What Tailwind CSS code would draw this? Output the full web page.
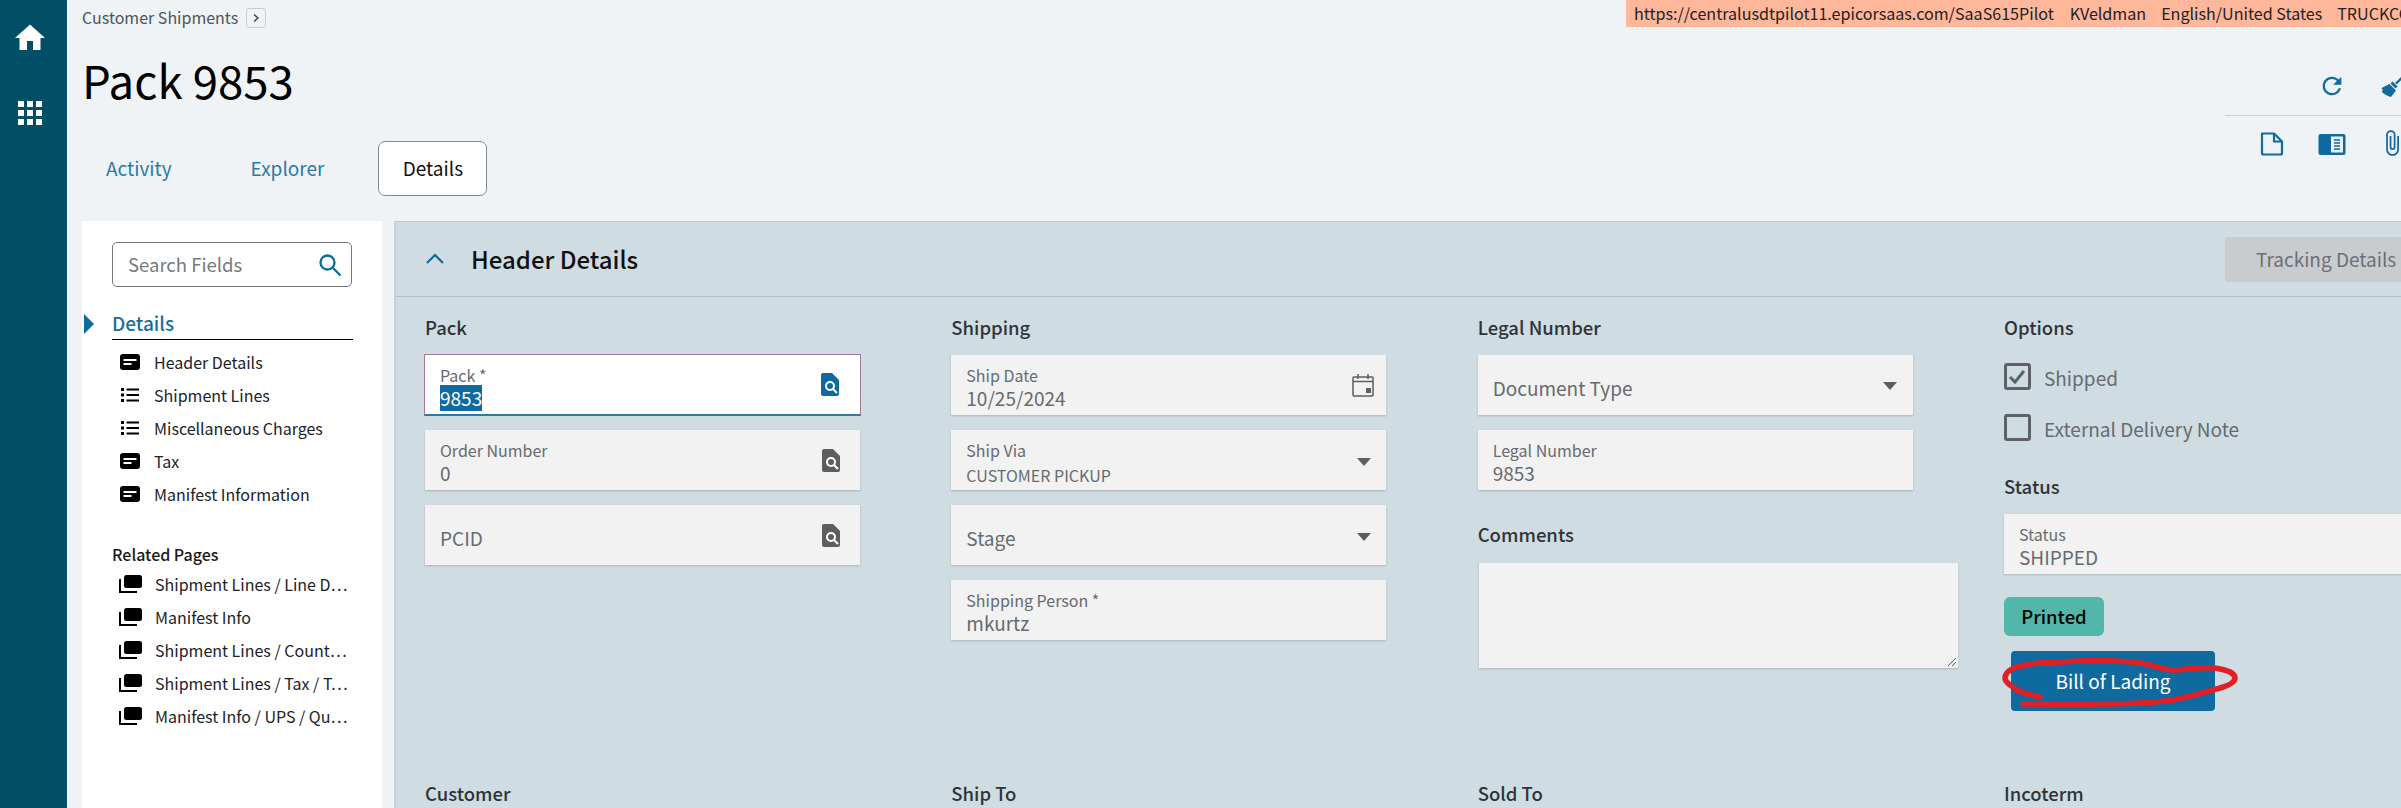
<!DOCTYPE html>
<html lang="en">
<head>
<meta charset="utf-8">
<title>Pack 9853</title>
<script src="https://cdn.jsdelivr.net/npm/@tailwindcss/browser@4"></script>
</head>
<body class="overflow-hidden">
<div class="relative flex w-[2401px] h-[808px] overflow-hidden bg-[#eff3f6] font-['Noto_Sans_CJK_SC',sans-serif] text-black">
  <!-- rail -->
  <aside class="w-[67px] shrink-0 bg-[#004f66] flex flex-col items-center pr-[7px] pt-[20px] gap-[45px]">
    <svg class="w-[36px] h-[36px]" viewBox="0 0 24 24" fill="#fff"><path d="M10 20v-6h4v6h5v-8h3L12 3 2 12h3v8z"/></svg>
    <div class="grid grid-cols-3 gap-[3px] w-[24px]">
      <span class="w-[6px] h-[6px] bg-white"></span><span class="w-[6px] h-[6px] bg-white"></span><span class="w-[6px] h-[6px] bg-white"></span>
      <span class="w-[6px] h-[6px] bg-white"></span><span class="w-[6px] h-[6px] bg-white"></span><span class="w-[6px] h-[6px] bg-white"></span>
      <span class="w-[6px] h-[6px] bg-white"></span><span class="w-[6px] h-[6px] bg-white"></span><span class="w-[6px] h-[6px] bg-white"></span>
    </div>
  </aside>

  <main class="flex-1 min-w-0 flex flex-col">
    <!-- page head -->
    <header class="flex h-[221px] shrink-0">
      <div class="w-[2158px] shrink-0 pl-[15px]">
        <div class="flex items-center h-[28px] pt-[6px] gap-[8px] text-[16px] leading-[20px] text-[#4d5358]">
          <span>Customer Shipments</span>
          <span class="w-[20px] h-[20px] mt-[2px] border border-[#c9cdd0] rounded-[3px] flex items-center justify-center">
            <svg class="w-[10px] h-[10px]" viewBox="0 0 10 10" fill="none" stroke="#444" stroke-width="1.4"><path d="M3 1.5 7 5 3 8.5"/></svg>
          </span>
        </div>
        <h1 class="mt-[21px] text-[45.5px] leading-[60px] font-normal">Pack 9853</h1>
        <nav class="mt-[32px] ml-[-15px] pl-[39px] flex items-center h-[55px] text-[19px] text-[#2a7ca6]">
          <span>Activity</span>
          <span class="ml-[79px]">Explorer</span>
          <span class="ml-[54px] w-[109px] h-[55px] flex items-center justify-center bg-white border border-[#85898c] rounded-[7px] text-[#111]">Details</span>
        </nav>
      </div>
      <div class="w-[197px] shrink-0 pt-[66px]">
        <div class="flex h-[50px] pl-[17px] border-b border-[#c9ced2] items-start">
          <span class="w-[60px]"></span>
          <span class="w-[60px] h-[40px] flex items-center justify-center">
            <svg class="w-[28px] h-[28px]" viewBox="0 0 24 24" fill="#0f6a9f"><path d="M17.65 6.35A7.958 7.958 0 0012 4c-4.42 0-7.99 3.58-7.99 8s3.57 8 7.99 8c3.73 0 6.84-2.55 7.73-6h-2.08A5.99 5.99 0 0112 18c-3.31 0-6-2.69-6-6s2.69-6 6-6c1.66 0 3.14.69 4.22 1.78L13 11h7V4l-2.35 2.35z"/></svg>
          </span>
          <span class="w-[60px] h-[40px] flex items-center justify-center">
            <svg class="w-[28px] h-[28px]" viewBox="0 0 28 28" fill="#0f6a9f"><path d="M26 2 17 11l1.6 1.6L27.6 3.6z"/><path d="M14.5 9.5 19.5 14.5 17.5 16.5 12.5 11.5z"/><path d="M11.5 12 18 18.500 13 25c-3-.8-7-2.8-9.500-5.500l1.500-1-1.500-2.500z"/></svg>
          </span>
        </div>
        <div class="flex pl-[17px] pt-[16px]">
          <span class="w-[60px] flex justify-center">
            <svg class="w-[24px] h-[24px]" viewBox="0 0 24 24" fill="none" stroke="#0f6a9f" stroke-width="2.2" stroke-linejoin="round"><path d="M2 1.5h12l8 8V21a1.5 1.5 0 0 1-1.5 1.5h-17A1.5 1.5 0 0 1 2 21z"/><path d="M14 1.5v8h8"/></svg>
          </span>
          <span class="w-[60px] flex justify-center">
            <svg class="w-[28px] h-[24px]" viewBox="0 0 28 24"><rect x="0.5" y="2" width="27" height="21" rx="2" fill="#0f6a9f"/><rect x="13" y="4.5" width="12" height="16" fill="#eff3f6"/><path d="M16 8h6M16 11h6M16 14h6M16 17h6" stroke="#0f6a9f" stroke-width="1.3"/></svg>
          </span>
          <span class="w-[60px] flex justify-center">
            <svg class="w-[28px] h-[28px] mt-[-3px]" viewBox="0 0 24 24" fill="#0f6a9f"><path d="M16.5 6v11.5c0 2.21-1.79 4-4 4s-4-1.79-4-4V5a2.5 2.5 0 015 0v10.5c0 .55-.45 1-1 1s-1-.45-1-1V6H10v9.5a2.5 2.5 0 005 0V5c0-2.21-1.79-4-4-4S7 2.79 7 5v12.5c0 3.04 2.46 5.5 5.5 5.5s5.5-2.46 5.5-5.5V6h-1.5z"/></svg>
          </span>
        </div>
      </div>
    </header>

    <div class="flex flex-1 min-h-0 pl-[15px] gap-[12px]">
      <!-- left nav -->
      <section class="w-[300px] shrink-0 bg-white pl-[30px] pr-[29px] pt-[21px] relative">
        <div class="flex items-center justify-between h-[45px] w-[240px] border border-[#73787c] rounded-[5px] pl-[15px] pr-[9px] text-[18.5px] text-[#74797d]">
          <span>Search Fields</span>
          <svg class="w-[24px] h-[24px]" viewBox="0 0 24 24" fill="none" stroke="#0f6a9f" stroke-width="2.3"><circle cx="9.5" cy="9.5" r="7"/><path d="m15 15 7.5 7.5"/></svg>
        </div>
        <div class="relative mt-[24px] h-[29px] border-b border-black w-[241px] text-[19px] leading-[24px] font-medium text-[#1a6e9c]">
          <span class="absolute left-[-28px] top-[3px] border-y-[10px] border-y-transparent border-l-[10px] border-l-[#0f6a9f]"></span>
          Details
        </div>
        <ul class="mt-[5px] w-[241px] text-[16px] text-[#1c2229]">
          <li class="flex items-center h-[33px] pl-[8px] gap-[14px]">
            <svg class="w-[20px] h-[16px] shrink-0" viewBox="0 0 20 16"><rect width="20" height="16" rx="3" fill="#000"/><path d="M3.500 5h13v2h-13zM3.500 9h8v2h-8z" fill="#fff"/></svg>Header Details</li>
          <li class="flex items-center h-[33px] pl-[8px] gap-[14px]">
            <svg class="w-[20px] h-[16px] shrink-0" viewBox="0 0 20 16" fill="#000"><path d="M1 1h3v3H1zM1 6.500h3v3H1zM1 12h3v3H1zM6.500 1.500H19v2H6.500zM6.500 7H19v2H6.500zM6.500 12.500H19v2H6.500z"/></svg>Shipment Lines</li>
          <li class="flex items-center h-[33px] pl-[8px] gap-[14px]">
            <svg class="w-[20px] h-[16px] shrink-0" viewBox="0 0 20 16" fill="#000"><path d="M1 1h3v3H1zM1 6.500h3v3H1zM1 12h3v3H1zM6.500 1.500H19v2H6.500zM6.500 7H19v2H6.500zM6.500 12.500H19v2H6.500z"/></svg>Miscellaneous Charges</li>
          <li class="flex items-center h-[33px] pl-[8px] gap-[14px]">
            <svg class="w-[20px] h-[16px] shrink-0" viewBox="0 0 20 16"><rect width="20" height="16" rx="3" fill="#000"/><path d="M3.500 5h13v2h-13zM3.500 9h8v2h-8z" fill="#fff"/></svg>Tax</li>
          <li class="flex items-center h-[33px] pl-[8px] gap-[14px]">
            <svg class="w-[20px] h-[16px] shrink-0" viewBox="0 0 20 16"><rect width="20" height="16" rx="3" fill="#000"/><path d="M3.500 5h13v2h-13zM3.500 9h8v2h-8z" fill="#fff"/></svg>Manifest Information</li>
        </ul>
        <div class="mt-[32px] text-[16px] leading-[24px] font-medium text-[#1a1a1a]">Related Pages</div>
        <ul class="mt-[1px] w-[241px] text-[16px] text-[#1c2229]">
          <li class="flex items-center h-[33px] pl-[7px] gap-[13px]"><svg class="w-[23px] h-[18px] shrink-0" viewBox="0 0 23 18"><rect x="5" y="0" width="18" height="13" rx="2.500" fill="#000"/><path d="M1 4v13h17" fill="none" stroke="#000" stroke-width="2"/></svg><span>Shipment Lines / Line D…</span></li>
          <li class="flex items-center h-[33px] pl-[7px] gap-[13px]"><svg class="w-[23px] h-[18px] shrink-0" viewBox="0 0 23 18"><rect x="5" y="0" width="18" height="13" rx="2.500" fill="#000"/><path d="M1 4v13h17" fill="none" stroke="#000" stroke-width="2"/></svg><span>Manifest Info</span></li>
          <li class="flex items-center h-[33px] pl-[7px] gap-[13px]"><svg class="w-[23px] h-[18px] shrink-0" viewBox="0 0 23 18"><rect x="5" y="0" width="18" height="13" rx="2.500" fill="#000"/><path d="M1 4v13h17" fill="none" stroke="#000" stroke-width="2"/></svg><span>Shipment Lines / Count…</span></li>
          <li class="flex items-center h-[33px] pl-[7px] gap-[13px]"><svg class="w-[23px] h-[18px] shrink-0" viewBox="0 0 23 18"><rect x="5" y="0" width="18" height="13" rx="2.500" fill="#000"/><path d="M1 4v13h17" fill="none" stroke="#000" stroke-width="2"/></svg><span>Shipment Lines / Tax / T…</span></li>
          <li class="flex items-center h-[33px] pl-[7px] gap-[13px]"><svg class="w-[23px] h-[18px] shrink-0" viewBox="0 0 23 18"><rect x="5" y="0" width="18" height="13" rx="2.500" fill="#000"/><path d="M1 4v13h17" fill="none" stroke="#000" stroke-width="2"/></svg><span>Manifest Info / UPS / Qu…</span></li>
        </ul>
      </section>

      <!-- main panel -->
      <section class="flex-1 min-w-0 bg-[#cfdce1] border-t border-l-[2px] border-t-[#bfccd2] border-l-[#c3d0d6]">
        <div class="flex items-center h-[75px] border-b border-[#a8c4c9] pl-[28px] overflow-hidden">
          <svg class="w-[22px] h-[14px] shrink-0" viewBox="0 0 22 14" fill="none" stroke="#0f6a9f" stroke-width="2.200"><path d="m3 11 8-8 8 8"/></svg>
          <span class="ml-[25px] text-[24px] font-medium text-[#111]">Header Details</span>
          <span class="ml-auto w-[176px] h-[45px] shrink-0 bg-[#c8cccf] rounded-l-[4px] pl-[31px] flex items-center text-[19px] text-[#6a7075] whitespace-nowrap overflow-hidden">Tracking Details</span>
        </div>
        <div class="grid grid-cols-[repeat(4,526.33px)] gap-y-[70px] pl-[29px] pt-[18px]">
          <!-- Pack -->
          <div>
            <h2 class="text-[18.5px] leading-[24px] font-medium text-[#2e3338]">Pack</h2>
            <div class="mt-[15px] w-[437px] h-[62px] flex items-center justify-between bg-white border border-[#a8789a] border-b-[2px] border-b-[#2a7ca6] pl-[15px] pr-[21px] ml-[-1px]">
              <div class="flex flex-col items-start pt-[6px]">
                <span class="text-[16px] leading-[20px] text-[#666b70]">Pack *</span>
                <span class="text-[19px] leading-[26px] bg-[#0f6a9f] text-white">9853</span>
              </div>
              <svg class="w-[18px] h-[23px]" viewBox="0 0 18 23"><path d="M2 0h9l7 7v14a2 2 0 0 1-2 2H2a2 2 0 0 1-2-2V2a2 2 0 0 1 2-2z" fill="#0f6a9f"/><circle cx="9" cy="13" r="4" fill="none" stroke="#fff" stroke-width="2"/><path d="m12 16 4 4" stroke="#fff" stroke-width="2.200"/></svg>
            </div>
            <div class="mt-[14px] w-[435px] h-[60px] flex items-center justify-between bg-[#f2f2f2] shadow-[0_1px_2px_rgba(0,0,0,0.18)] pl-[15px] pr-[20px]">
              <div class="pt-[6px]"><div class="text-[16px] leading-[20px] text-[#666b70]">Order Number</div><div class="text-[19px] leading-[26px] text-[#666b70]">0</div></div>
              <svg class="w-[18px] h-[23px]" viewBox="0 0 18 23"><path d="M2 0h9l7 7v14a2 2 0 0 1-2 2H2a2 2 0 0 1-2-2V2a2 2 0 0 1 2-2z" fill="#5e5e5e"/><circle cx="9" cy="13" r="4" fill="none" stroke="#fff" stroke-width="2"/><path d="m12 16 4 4" stroke="#fff" stroke-width="2.200"/></svg>
            </div>
            <div class="mt-[15px] w-[435px] h-[60px] flex items-center justify-between bg-[#f2f2f2] shadow-[0_1px_2px_rgba(0,0,0,0.18)] pl-[15px] pr-[20px]">
              <span class="pt-[7px] text-[19px] text-[#666b70]">PCID</span>
              <svg class="w-[18px] h-[23px]" viewBox="0 0 18 23"><path d="M2 0h9l7 7v14a2 2 0 0 1-2 2H2a2 2 0 0 1-2-2V2a2 2 0 0 1 2-2z" fill="#5e5e5e"/><circle cx="9" cy="13" r="4" fill="none" stroke="#fff" stroke-width="2"/><path d="m12 16 4 4" stroke="#fff" stroke-width="2.200"/></svg>
            </div>
          </div>
          <!-- Shipping -->
          <div>
            <h2 class="text-[18.5px] leading-[24px] font-medium text-[#2e3338]">Shipping</h2>
            <div class="mt-[16px] w-[435px] h-[60px] flex items-center justify-between bg-[#f2f2f2] shadow-[0_1px_2px_rgba(0,0,0,0.18)] pl-[15px] pr-[12px]">
              <div class="pt-[6px]"><div class="text-[16px] leading-[20px] text-[#666b70]">Ship Date</div><div class="text-[19px] leading-[26px] text-[#666b70]">10/25/2024</div></div>
              <svg class="w-[22px] h-[23px]" viewBox="0 0 22 23" fill="none" stroke="#5e5e5e" stroke-width="1.500"><rect x="1" y="3" width="20" height="19" rx="1"/><path d="M1 7.500h20M6 0v5M16 0v5"/><rect x="14" y="14" width="5" height="5" fill="#5e5e5e" stroke="none"/></svg>
            </div>
            <div class="mt-[15px] w-[435px] h-[60px] flex items-center justify-between bg-[#f2f2f2] shadow-[0_1px_2px_rgba(0,0,0,0.18)] pl-[15px] pr-[15px]">
              <div class="pt-[8px]"><div class="text-[16px] leading-[20px] text-[#666b70]">Ship Via</div><div class="mt-[2px] text-[16px] leading-[26px] text-[#666b70]">CUSTOMER PICKUP</div></div>
              <span class="mt-[4px] border-x-[7px] border-x-transparent border-t-[8px] border-t-[#5e5e5e]"></span>
            </div>
            <div class="mt-[15px] w-[435px] h-[60px] flex items-center justify-between bg-[#f2f2f2] shadow-[0_1px_2px_rgba(0,0,0,0.18)] pl-[15px] pr-[15px]">
              <span class="pt-[7px] text-[19px] text-[#666b70]">Stage</span>
              <span class="mt-[4px] border-x-[7px] border-x-transparent border-t-[8px] border-t-[#5e5e5e]"></span>
            </div>
            <div class="mt-[15px] w-[435px] h-[60px] flex items-center bg-[#f2f2f2] shadow-[0_1px_2px_rgba(0,0,0,0.18)] pl-[15px]">
              <div class="pt-[6px]"><div class="text-[16px] leading-[20px] text-[#666b70]">Shipping Person *</div><div class="text-[19px] leading-[26px] text-[#666b70]">mkurtz</div></div>
            </div>
          </div>
          <!-- Legal -->
          <div>
            <h2 class="text-[18.5px] leading-[24px] font-medium text-[#2e3338]">Legal Number</h2>
            <div class="mt-[16px] w-[435px] h-[60px] flex items-center justify-between bg-[#f2f2f2] shadow-[0_1px_2px_rgba(0,0,0,0.18)] pl-[15px] pr-[16px]">
              <span class="pt-[7px] text-[19px] text-[#666b70]">Document Type</span>
              <span class="mt-[1px] border-x-[7px] border-x-transparent border-t-[8px] border-t-[#5e5e5e]"></span>
            </div>
            <div class="mt-[15px] w-[435px] h-[60px] flex items-center bg-[#f2f2f2] shadow-[0_1px_2px_rgba(0,0,0,0.18)] pl-[15px]">
              <div class="pt-[6px]"><div class="text-[16px] leading-[20px] text-[#666b70]">Legal Number</div><div class="text-[19px] leading-[26px] text-[#666b70]">9853</div></div>
            </div>
            <h2 class="mt-[32px] text-[18.5px] leading-[24px] font-medium text-[#2e3338]">Comments</h2>
            <div class="relative mt-[17px] w-[479px] h-[105px] ml-[1px] bg-[#f2f2f2] shadow-[0_1px_2px_rgba(0,0,0,0.18)]">
              <svg class="absolute right-[1px] bottom-[1px] w-[10px] h-[10px]" viewBox="0 0 10 10" stroke="#555" stroke-width="1"><path d="M1 9 9 1M5 9l4-4"/></svg>
            </div>
          </div>
          <!-- Options -->
          <div>
            <h2 class="text-[18.5px] leading-[24px] font-medium text-[#2e3338]">Options</h2>
            <div class="mt-[24px] flex items-center gap-[13px] h-[27px] text-[19px] text-[#666b70]">
              <span class="w-[27px] h-[27px] border-[3px] border-[#5e6266] rounded-[3px] flex items-center justify-center">
                <svg class="w-[18px] h-[16px]" viewBox="0 0 18 16" fill="none" stroke="#5e6266" stroke-width="3"><path d="m2 8 5 5 9-11"/></svg>
              </span><span class="pt-[3px]">Shipped</span>
            </div>
            <div class="mt-[24px] flex items-center gap-[13px] h-[27px] text-[19px] text-[#666b70]">
              <span class="w-[27px] h-[27px] border-[3px] border-[#5e6266] rounded-[3px]"></span><span class="pt-[3px]">External Delivery Note</span>
            </div>
            <h2 class="mt-[33px] text-[18.5px] leading-[24px] font-medium text-[#2e3338]">Status</h2>
            <div class="mt-[16px] w-[435px] h-[60px] flex items-center bg-[#f2f2f2] shadow-[0_1px_2px_rgba(0,0,0,0.18)] pl-[15px]">
              <div class="pt-[6px]"><div class="text-[16px] leading-[20px] text-[#666b70]">Status</div><div class="text-[19px] leading-[26px] text-[#666b70]">SHIPPED</div></div>
            </div>
            <div class="mt-[23px] w-[100px] h-[39px] flex items-center justify-center rounded-[6px] bg-[#52b7a8] text-[18.5px] font-medium text-black">Printed</div>
            <div class="relative mt-[15px] ml-[7px] w-[204px] h-[60px] flex items-center justify-center rounded-[4px] bg-[#0f6a9f] text-[19px] text-white">
              Bill of Lading
              <svg class="absolute left-[-10px] top-0 w-[240px] h-[60px] overflow-visible" viewBox="-10 0 240 60" fill="none" stroke="#e11f26" stroke-width="5.500" stroke-linecap="round" stroke-linejoin="round"><path d="M29 46C20 44 10 42 6 39 0 35-6 31-6 27-6 21 0 18 6 16 20 12 35 11 49 11 75 9 100 9 122 11 140 12 148 19 162 19 178 19 195 14 209 18 220 20 224 24 224 27 224 32 216 35 209 37 195 41 178 46 162 49 140 52 115 53 89 53 62 54 38 53 12 53"/></svg>
            </div>
          </div>
          <h2 class="text-[18.5px] leading-[24px] font-medium text-[#2e3338]">Customer</h2>
          <h2 class="text-[18.5px] leading-[24px] font-medium text-[#2e3338]">Ship To</h2>
          <h2 class="text-[18.5px] leading-[24px] font-medium text-[#2e3338]">Sold To</h2>
          <h2 class="text-[18.5px] leading-[24px] font-medium text-[#2e3338]">Incoterm</h2>
        </div>
      </section>
    </div>
  </main>

  <!-- environment banner overlay -->
  <div class="absolute left-[1626px] right-0 top-0 h-[27px] bg-[#ffb79b] pl-[8px] text-[16.1px] leading-[27px] text-[#222] whitespace-nowrap overflow-hidden">https://centralusdtpilot11.epicorsaas.com/SaaS615Pilot<span class="ml-[16px]">KVeldman</span><span class="ml-[15px]">English/United States</span><span class="ml-[15px]">TRUCKCO</span></div>
</div>
</body>
</html>
